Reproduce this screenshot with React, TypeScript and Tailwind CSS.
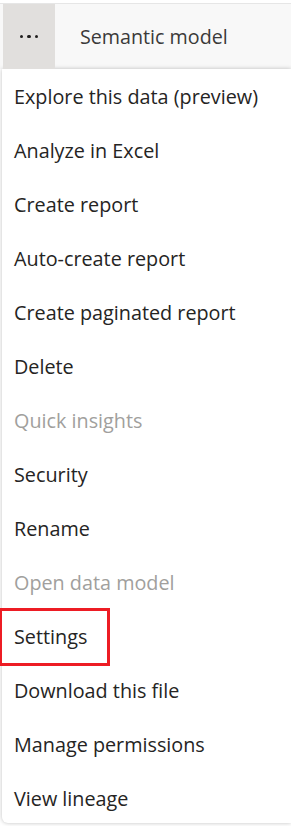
import React from 'react';

const items: { label: string; disabled?: boolean; marked?: boolean }[] = [
  { label: 'Explore this data (preview)' },
  { label: 'Analyze in Excel' },
  { label: 'Create report' },
  { label: 'Auto-create report' },
  { label: 'Create paginated report' },
  { label: 'Delete' },
  { label: 'Quick insights', disabled: true },
  { label: 'Security' },
  { label: 'Rename' },
  { label: 'Open data model', disabled: true },
  { label: 'Settings', marked: true },
  { label: 'Download this file' },
  { label: 'Manage permissions' },
  { label: 'View lineage' },
];

export default function App() {
  return (
    <div
      className="w-[291px] h-[826px] bg-white overflow-hidden"
      style={{ fontFamily: '"Open Sans", "Noto Sans", sans-serif' }}
    >
      <div className="h-[3px] bg-white" />
      <div className="h-[66px] flex items-center bg-[#f8f8f8] border-t border-[#e6e6e6]">
        <div className="ml-[3px] w-[52px] h-full bg-[#e1dfdd] flex items-center justify-center gap-[4px]">
          <span className="w-[3.5px] h-[3.5px] rounded-full bg-[#201f1e]" />
          <span className="w-[3.5px] h-[3.5px] rounded-full bg-[#201f1e]" />
          <span className="w-[3.5px] h-[3.5px] rounded-full bg-[#201f1e]" />
        </div>
        <span className="ml-[25px] text-[19.7px] text-[#3b3a39]">Semantic model</span>
      </div>
      <div className="ml-[2px] pt-[1px] bg-white rounded-bl-[6px] shadow-[0_0_4px_rgba(0,0,0,0.25)] h-[754px]">
        {items.map((it) => (
          <div key={it.label} className="h-[54px] flex items-center pl-[12px]">
            <span
              className={
                'text-[19.8px] leading-none ' +
                (it.disabled ? 'text-[#a19f9d]' : 'text-[#252423]') +
                (it.marked ? ' outline-[3.5px] outline-solid outline-[#ed1c24] py-[16px] pl-[12px] pr-[20px] -ml-[12px]' : '')
              }
            >
              {it.label}
            </span>
          </div>
        ))}
      </div>
    </div>
  );
}
